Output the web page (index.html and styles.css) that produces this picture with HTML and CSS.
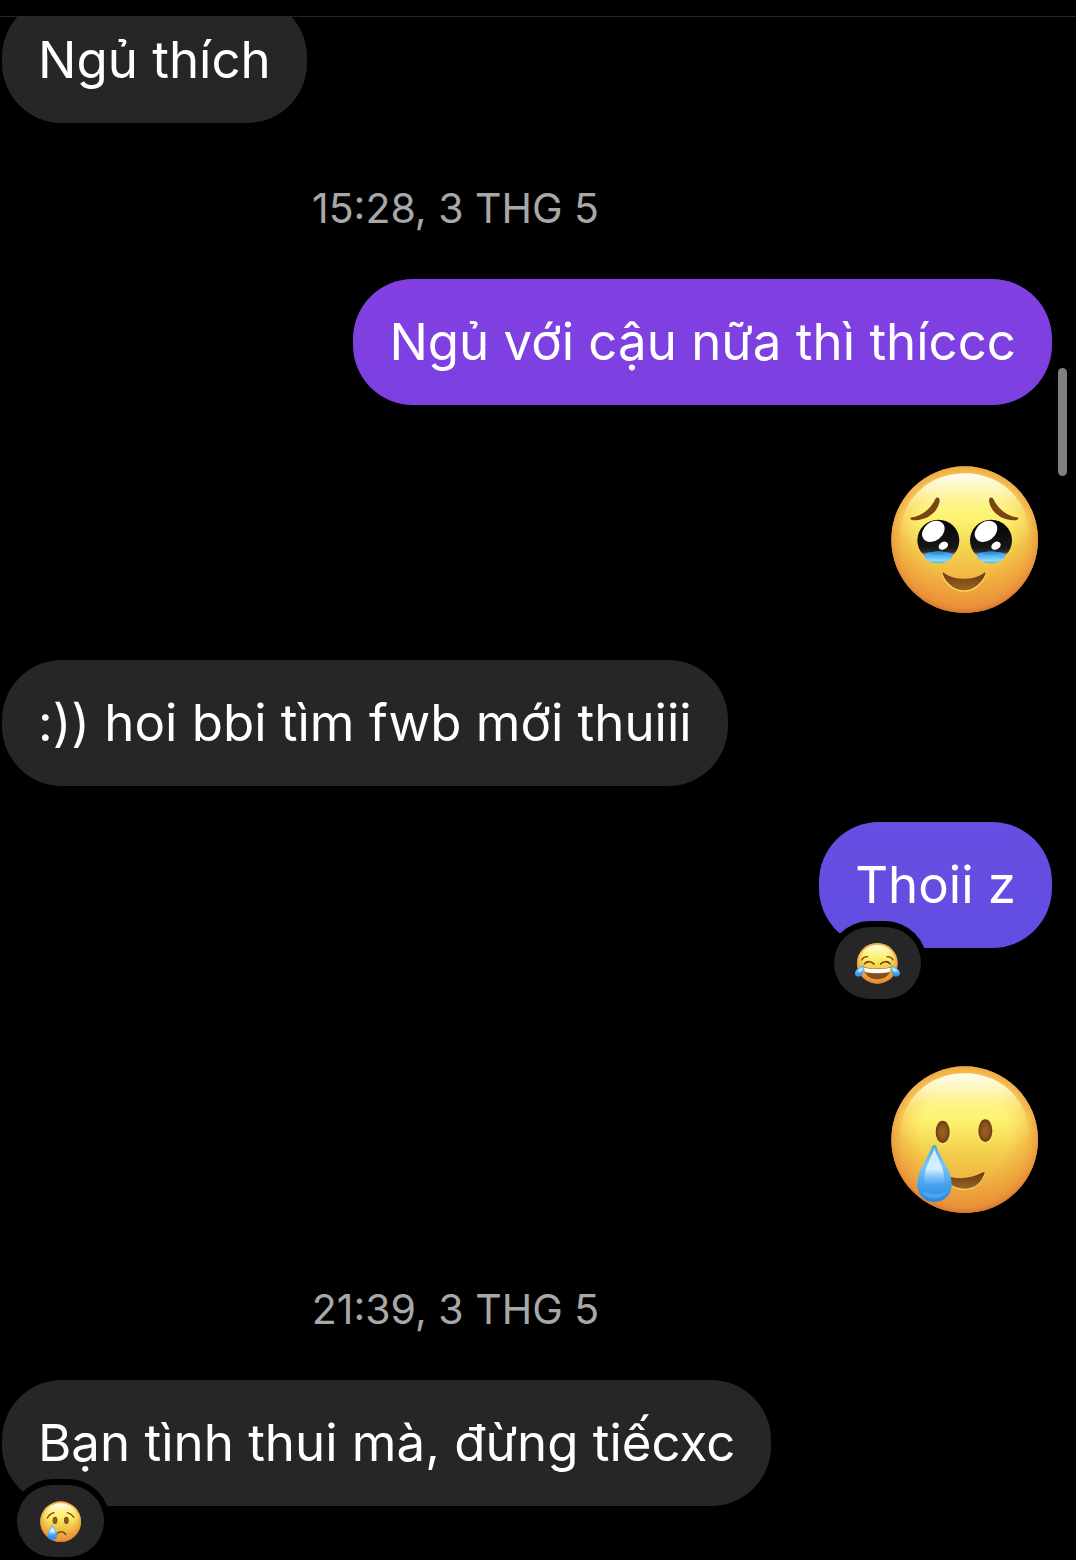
FILE: index.html
```html
<!DOCTYPE html>
<html lang="vi">
<head>
<meta charset="utf-8">
<meta name="viewport" content="width=device-width, initial-scale=1">
<title>Tin nhắn</title>
<link rel="stylesheet" href="styles.css">
</head>
<body>
<svg class="defs" aria-hidden="true">
  <defs>
    <linearGradient id="skin" x1="0" y1="0" x2="0" y2="1">
      <stop offset="0" stop-color="#f9c948"/>
      <stop offset=".15" stop-color="#fbe070"/>
      <stop offset=".34" stop-color="#fdf06c"/>
      <stop offset=".54" stop-color="#f4d650"/>
      <stop offset=".78" stop-color="#f1b341"/>
      <stop offset="1" stop-color="#e8963a"/>
    </linearGradient>
    <radialGradient id="rim" cx=".5" cy=".46" r=".55">
      <stop offset=".55" stop-color="#ec9338" stop-opacity="0"/>
      <stop offset=".8" stop-color="#ec9338" stop-opacity=".45"/>
      <stop offset=".92" stop-color="#e98b37" stop-opacity=".8"/>
      <stop offset="1" stop-color="#cf6f2c"/>
    </radialGradient>
    <linearGradient id="gloss" x1="0" y1="0" x2="0" y2="1">
      <stop offset="0" stop-color="#fffdf2"/>
      <stop offset=".2" stop-color="#fffcc8" stop-opacity=".85"/>
      <stop offset=".5" stop-color="#fffb80" stop-opacity=".35"/>
      <stop offset=".9" stop-color="#fffb80" stop-opacity="0"/>
    </linearGradient>
    <linearGradient id="brown" x1="0" y1="0" x2="0" y2="1">
      <stop offset="0" stop-color="#6b3a12"/>
      <stop offset="1" stop-color="#9a6422"/>
    </linearGradient>
    <radialGradient id="dot">
      <stop offset="0" stop-color="#976225"/>
      <stop offset=".6" stop-color="#8a531b"/>
      <stop offset="1" stop-color="#673a10"/>
    </radialGradient>
    <linearGradient id="pupil" x1="0" y1="0" x2="0" y2="1">
      <stop offset="0" stop-color="#030303"/>
      <stop offset=".68" stop-color="#171717"/>
      <stop offset=".78" stop-color="#2c2b30"/>
      <stop offset=".9" stop-color="#e8e0ea"/>
    </linearGradient>
    <linearGradient id="pool" x1="0" y1="0" x2="0" y2="1">
      <stop offset="0" stop-color="#3da4ef"/>
      <stop offset=".4" stop-color="#55b5f8"/>
      <stop offset=".75" stop-color="#8ddaf8"/>
      <stop offset="1" stop-color="#54b8cf"/>
    </linearGradient>
    <linearGradient id="drop" x1="0" y1="0" x2="0" y2="1">
      <stop offset="0" stop-color="#4ba6dc"/>
      <stop offset=".35" stop-color="#7ac7f8"/>
      <stop offset=".7" stop-color="#48a1ef"/>
      <stop offset="1" stop-color="#2787dd"/>
    </linearGradient>
    <linearGradient id="dropShine" x1="0" y1="0" x2="0" y2="1">
      <stop offset="0" stop-color="#c8effc"/>
      <stop offset=".55" stop-color="#d4f0ff"/>
      <stop offset="1" stop-color="#75bdfc" stop-opacity="0"/>
    </linearGradient>
    <g id="face">
      <circle cx="253" cy="255" r="220" fill="url(#skin)"/>
      <circle cx="253" cy="255" r="220" fill="url(#rim)"/>
      <path d="M62 222C72 126 150 56 253 56s181 70 191 166c4 38-26 80-60 80H122c-36 0-64-44-60-80Z" fill="url(#gloss)"/>
    </g>
  </defs>
</svg>

<header class="topbar"></header>
<main class="chat">
  <div class="bubble received first">Ngủ thích</div>

  <time class="stamp">15:28, 3 THG 5</time>

  <div class="bubble sent violet">Ngủ với cậu nữa thì thíccc</div>

  <svg class="sticker" viewBox="32 34 441 441" role="img" aria-label="Mặt cố nén nước mắt">
    <use href="#face"/>
    <path d="M94 188c30-4 56-24 71-55 5-8 13-5 13 4-4 38-44 64-83 59-6-1-6-7-1-8Z" fill="#7b4415"/>
    <path d="M410 188c-30-4-56-24-71-55-5-8-13-5-13 4 4 38 44 64 83 59 6-1 6-7 1-8Z" fill="#7b4415"/>
    <g id="wetEye">
      <ellipse cx="174" cy="257" rx="63" ry="62" fill="url(#pupil)"/>
      <ellipse cx="159" cy="230" rx="37" ry="28" transform="rotate(-38 159 230)" fill="#fff"/>
      <ellipse cx="189" cy="273" rx="15" ry="11" transform="rotate(-30 189 273)" fill="#fff"/>
      <path d="M132 301c6-13 78-13 84 0 0 15-18 25-42 25s-42-10-42-25Z" fill="url(#pool)"/>
      <path d="M143 296c16-7 46-7 62 0-14 5-48 5-62 0Z" fill="#2893df"/>
    </g>
    <use href="#wetEye" x="158"/>
    <path d="M186 356C192 382 218 409 251 409s59-27 65-53" fill="none" stroke="#f8df63" stroke-width="4"/>
    <path d="M186 354c3-2 7 1 10 5 30 18 80 18 110 0 4-4 8-7 10-4C310 378 284 407 251 407S192 378 186 354Z" fill="url(#brown)"/>
  </svg>

  <div class="bubble received">:)) hoi bbi tìm fwb mới thuiii</div>

  <div class="bubble sent indigo">Thoii z
    <span class="reaction">
      <svg class="joy" viewBox="142 396 135 123" role="img" aria-label="Mặt cười ra nước mắt">
        <use href="#face" transform="translate(138.8 386.3) scale(.277)"/>
        <g fill="none" stroke="#713d13" stroke-width="4" stroke-linecap="round">
          <path d="M162 447c3-6 9-10 18-10M256 447c-3-6-9-10-18-10"/>
          <path d="M171 458c7-8 20-8 28 1M219 459c8-9 21-9 28-1" stroke-width="5"/>
        </g>
        <path d="M168 469c26 5 56 5 82 0-1 22-17 36-41 36s-40-14-41-36Z" fill="#865017"/>
        <path d="M169 470c26 5 54 5 80 0 0 8-2 12-6 14-22 4-46 4-68 0-4-2-6-6-6-14Z" fill="#fff"/>
        <path d="M169 462c-13 5-26 15-27 25-1 6 4 10 11 10 12 0 17-16 16-35ZM250 462c13 5 26 15 27 25 0 6-5 10-12 10-12 0-16-16-15-35Z" fill="url(#drop)"/>
        <path d="M166 468c-9 4-16 12-18 18 5 4 14-2 18-18ZM253 468c9 4 16 12 18 18-5 4-14-2-18-18Z" fill="url(#dropShine)"/>
      </svg>
    </span>
  </div>

  <svg class="sticker late" viewBox="32 34 441 441" role="img" aria-label="Mặt cười rơi lệ">
    <use href="#face"/>
    <ellipse cx="188" cy="234" rx="23" ry="35" fill="#fae66c"/>
    <ellipse cx="315" cy="231" rx="23" ry="35" fill="#fae66c"/>
    <ellipse cx="187" cy="232" rx="21" ry="34" fill="url(#dot)"/>
    <ellipse cx="315" cy="228" rx="21" ry="34" fill="url(#dot)"/>
    <path d="M186 358C199 386 224 404 253 404s51-22 59-48" fill="none" stroke="#fae66c" stroke-width="4"/>
    <path d="M186 357c32 19 82 17 116-1 4-3 9-5 11-2C305 382 284 402 253 402S199 386 186 357Z" fill="url(#brown)"/>
    <path d="M162 270c-5 0-8 7-11 15-14 35-40 62-40 104 0 34 22 53 51 53s52-19 52-53c0-42-28-69-42-104-3-8-5-15-10-15Z" fill="url(#drop)"/>
    <path d="M162 280c-4 20-30 58-30 90 0 20 12 24 30 24s30-4 30-24c0-32-26-70-30-90Z" fill="url(#dropShine)"/>
    <path d="M124 408c8 16 21 23 38 23s31-7 39-23c-14 12-63 12-77 0Z" fill="#75bdfc" opacity=".4"/>
  </svg>

  <time class="stamp">21:39, 3 THG 5</time>

  <div class="bubble received">Bạn tình thui mà, đừng tiếcxc
    <span class="reaction">
      <svg class="cry" viewBox="120 120 123 123" role="img" aria-label="Mặt khóc">
        <use href="#face" transform="translate(111.8 111.3) scale(.277)"/>
        <g fill="none" stroke="#7b4415" stroke-width="4" stroke-linecap="round">
          <path d="M142 171c5-9 11-14 20-16M202 155c9 2 15 7 20 14"/>
          <path d="M170 219c7-9 20-9 27 1" stroke-width="5"/>
        </g>
        <ellipse cx="165" cy="178" rx="7" ry="11" fill="url(#dot)"/>
        <ellipse cx="199" cy="178" rx="7" ry="11" fill="url(#dot)"/>
        <path d="M157 190c-3 9-15 20-15 33 0 9 6 14 15 14s15-5 15-14c0-13-12-24-15-33Z" fill="url(#drop)"/>
        <path d="M157 196c-3 8-9 14-9 22 0 7 18 7 18 0 0-8-6-14-9-22Z" fill="url(#dropShine)"/>
      </svg>
    </span>
  </div>
</main>
<div class="scroll-thumb"></div>
</body>
</html>
```
FILE: styles.css
```css
* {
  box-sizing: border-box;
}

body {
  position: relative;
  margin: 0;
  background: #000;
  color: #fff;
  font-family: Inter, "Noto Sans", sans-serif;
}

.defs {
  position: absolute;
  width: 0;
  height: 0;
}

.topbar {
  height: 17px;
  border-bottom: 1px solid #262626;
}

.chat {
  display: flex;
  flex-direction: column;
  align-items: flex-start;
  overflow: hidden;
  padding: 0 24px 54px 2px;
}

.bubble {
  position: relative;
  padding: 31px 36px;
  border-radius: 60px;
  font-size: 51px;
  line-height: 64px;
}

.received {
  background: #262626;
}

.first {
  margin-top: -20px;
}

.sent {
  align-self: flex-end;
}

.violet {
  background: linear-gradient(#8240e2, #7c40e0);
}

.indigo {
  margin-top: 36px;
  background: linear-gradient(#684ee2, #604ee0);
}

.stamp {
  align-self: stretch;
  margin: 61px 143px 47px 0;
  color: #a8a8a8;
  font-size: 41px;
  line-height: 48px;
  text-align: center;
}

.sticker {
  align-self: flex-end;
  width: 147px;
  height: 147px;
  margin: 61px 14px 47px 0;
}

.late {
  margin-top: 118px;
  margin-bottom: 11px;
}

.reaction {
  position: absolute;
  left: 15px;
  bottom: -51px;
  display: flex;
  align-items: center;
  justify-content: center;
  width: 87px;
  height: 72px;
  border-radius: 36px;
  background: #262626;
  box-shadow: 0 0 0 6px #000;
}

.joy {
  width: 45px;
  height: 41px;
}

.cry {
  width: 41px;
  height: 41px;
}

.scroll-thumb {
  position: absolute;
  top: 368px;
  right: 9px;
  width: 9px;
  height: 108px;
  border-radius: 5px;
  background: #808080;
}
```
